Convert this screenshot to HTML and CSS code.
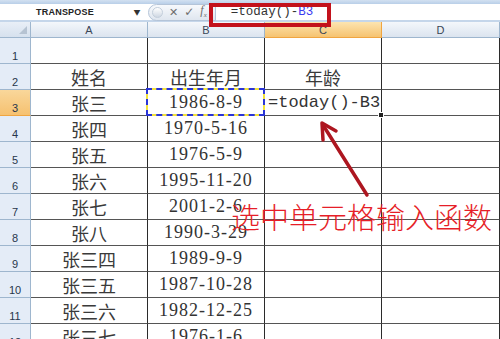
FILE: index.html
```html
<!DOCTYPE html>
<html lang="zh-CN">
<head>
    <meta charset="UTF-8">
    <title>TODAY 函数</title>
    <link rel="stylesheet" href="styles.css">
</head>
<body>
    <div class="app">
        <div class="ribbon-edge"></div>

        <div class="formula-bar">
            <div class="name-box">TRANSPOSE</div>
            <span class="drop">&#9660;</span>
            <div class="fx-tools">
                <span class="dot"></span>
                <span class="tool">&#10005;</span>
                <span class="tool check">&#10003;</span>
                <span class="tool fx">f<sub>x</sub></span>
            </div>
            <div class="formula">=today()-<span class="ref">B3</span></div>
        </div>

        <div class="sheet">
            <div class="corner"></div>
            <div class="col-head">A</div>
            <div class="col-head">B</div>
            <div class="col-head active">C</div>
            <div class="col-head">D</div>

            <div class="row-head">1</div>
            <div class="cell"></div><div class="cell"></div><div class="cell"></div><div class="cell"></div>

            <div class="row-head">2</div>
            <div class="cell">姓名</div><div class="cell">出生年月</div><div class="cell">年龄</div><div class="cell"></div>

            <div class="row-head active">3</div>
            <div class="cell">张三</div>
            <div class="cell num copy-range">1986-8-9</div>
            <div class="cell editing">=today()-B3</div>
            <div class="cell"></div>

            <div class="row-head">4</div>
            <div class="cell">张四</div><div class="cell num">1970-5-16</div><div class="cell"></div><div class="cell"></div>

            <div class="row-head">5</div>
            <div class="cell">张五</div><div class="cell num">1976-5-9</div><div class="cell"></div><div class="cell"></div>

            <div class="row-head">6</div>
            <div class="cell">张六</div><div class="cell num">1995-11-20</div><div class="cell"></div><div class="cell"></div>

            <div class="row-head">7</div>
            <div class="cell">张七</div><div class="cell num">2001-2-6</div><div class="cell"></div><div class="cell"></div>

            <div class="row-head">8</div>
            <div class="cell">张八</div><div class="cell num">1990-3-29</div><div class="cell"></div><div class="cell"></div>

            <div class="row-head">9</div>
            <div class="cell">张三四</div><div class="cell num">1989-9-9</div><div class="cell"></div><div class="cell"></div>

            <div class="row-head">10</div>
            <div class="cell">张三五</div><div class="cell num">1987-10-28</div><div class="cell"></div><div class="cell"></div>

            <div class="row-head">11</div>
            <div class="cell">张三六</div><div class="cell num">1982-12-25</div><div class="cell"></div><div class="cell"></div>

            <div class="row-head">12</div>
            <div class="cell">张三七</div><div class="cell num">1976-1-6</div><div class="cell"></div><div class="cell"></div>
        </div>

        <!-- annotations drawn over the sheet -->
        <div class="focus-box"></div>
        <svg class="arrow" width="500" height="339" viewBox="0 0 500 339">
            <line x1="367" y1="195" x2="323" y2="125" />
            <polyline points="323,140 322,123 336,131" />
        </svg>
        <div class="note">选中单元格输入函数</div>
    </div>
</body>
</html>
```

FILE: styles.css
```css
html, body {
    margin: 0;
    padding: 0;
    background: #ffffff;
}

body {
    width: 500px;
    height: 339px;
    overflow: hidden;
    font-family: "Noto Sans CJK SC", sans-serif;
}

.app {
    position: relative;
    width: 500px;
    height: 339px;
    overflow: hidden;
}

.ribbon-edge {
    height: 4px;
    background: linear-gradient(#d3e1f1, #b9cfe8);
}

/* formula bar */
.formula-bar {
    display: flex;
    align-items: center;
    height: 18px;
    background: #ffffff;
    border-bottom: 2px solid #c5d6ea;
    box-sizing: border-box;
}

.name-box {
    width: 130px;
    text-align: center;
    font-family: "Liberation Sans", sans-serif;
    font-size: 9px;
    font-weight: bold;
    letter-spacing: 0.2px;
    color: #222;
}

.drop {
    width: 14px;
    font-size: 7px;
    color: #333;
    text-align: center;
}

.fx-tools {
    display: flex;
    align-items: center;
    gap: 6px;
    height: 15px;
    margin-left: 4px;
    padding: 0 8px 0 3px;
    border: 1px solid #b4c4d8;
    border-radius: 9px 0 0 9px;
    background: linear-gradient(#f7f9fc, #dfe6ef);
    color: #555;
}

.fx-tools .dot {
    width: 9px;
    height: 9px;
    border-radius: 50%;
    background: linear-gradient(#ffffff, #cfd8e3);
    border: 1px solid #c3cedb;
}

.fx-tools .tool {
    font-family: "DejaVu Sans", sans-serif;
    font-size: 11px;
    line-height: 1;
    color: #6d6d6d;
}

.fx-tools .check {
    font-size: 12px;
}

.fx-tools .fx {
    font-family: "Liberation Serif", serif;
    font-style: italic;
    font-size: 12px;
}

.fx-tools .fx sub {
    font-size: 7px;
}

.formula {
    flex: 1;
    padding-left: 15px;
    font-family: "Liberation Mono", monospace;
    font-size: 12.5px;
    color: #333;
}

.formula .ref {
    color: #3b3bf0;
}

/* sheet grid */
.sheet {
    display: grid;
    grid-template-columns: 31px 117px 117px 117px 118px;
    grid-template-rows: 16px repeat(12, 26px);
}

.corner {
    position: relative;
    background: linear-gradient(#e9eff7, #d6e1ee);
    border-right: 1px solid #9eb6ce;
    border-bottom: 1px solid #9eb6ce;
}

.corner::after {
    content: "";
    position: absolute;
    right: 3px;
    bottom: 3px;
    border-left: 8px solid transparent;
    border-bottom: 8px solid #b6c3d2;
}

.col-head {
    display: flex;
    align-items: center;
    justify-content: center;
    font-family: "Liberation Sans", sans-serif;
    font-size: 11px;
    color: #3a4657;
    background: linear-gradient(#f4f7fb, #dbe4ef);
    border-right: 1px solid #9eb6ce;
    border-bottom: 1px solid #9eb6ce;
    box-sizing: border-box;
}

.col-head.active {
    background: linear-gradient(#fce4b0, #f6c370);
    border-right-color: #f0a540;
    border-bottom-color: #f0a540;
}

.row-head {
    display: flex;
    align-items: flex-end;
    justify-content: center;
    padding-bottom: 1px;
    font-family: "Liberation Sans", sans-serif;
    font-size: 11px;
    color: #27364b;
    background: #e4ecf7;
    border-right: 1px solid #9eb6ce;
    border-bottom: 1px solid #9eb6ce;
    box-sizing: border-box;
}

.row-head.active {
    background: linear-gradient(#f9d79b, #f6c170);
    border-bottom-color: #f0a540;
}

.cell {
    display: flex;
    align-items: center;
    justify-content: center;
    font-size: 18px;
    color: #3a3a3a;
    white-space: nowrap;
    border-right: 1px solid #2b2b2b;
    border-bottom: 1px solid #555;
    box-sizing: border-box;
}

.cell.num {
    font-family: "Liberation Serif", serif;
    font-size: 18px;
    letter-spacing: 1px;
    color: #333;
}

.copy-range {
    position: relative;
}

.copy-range::before,
.copy-range::after {
    content: "";
    position: absolute;
    top: -2px;
    left: -2px;
    right: -1px;
    bottom: -1px;
}

.copy-range::before {
    border: 2px solid #f3e23a;
}

.copy-range::after {
    border: 2px dashed #2a35d8;
}

.editing {
    position: relative;
    justify-content: flex-start;
    padding-left: 3px;
    font-family: "Liberation Mono", monospace;
    font-size: 17px;
    color: #333;
}

.editing::after {
    content: "";
    position: absolute;
    right: -3px;
    bottom: -3px;
    width: 4px;
    height: 4px;
    background: #222;
    border: 1px solid #fff;
}

/* annotations */
.focus-box {
    position: absolute;
    left: 209px;
    top: 3px;
    width: 122px;
    height: 24px;
    border: 4px solid #c3121c;
    box-sizing: border-box;
}

.arrow {
    position: absolute;
    left: 0;
    top: 0;
}

.arrow line,
.arrow polyline {
    fill: none;
    stroke: #ad1620;
    stroke-width: 3.5;
    stroke-linecap: round;
    stroke-linejoin: round;
}

.note {
    position: absolute;
    left: 231px;
    top: 197px;
    font-size: 29px;
    font-weight: 300;
    line-height: 38px;
    color: #e61e28;
    white-space: nowrap;
}
```
